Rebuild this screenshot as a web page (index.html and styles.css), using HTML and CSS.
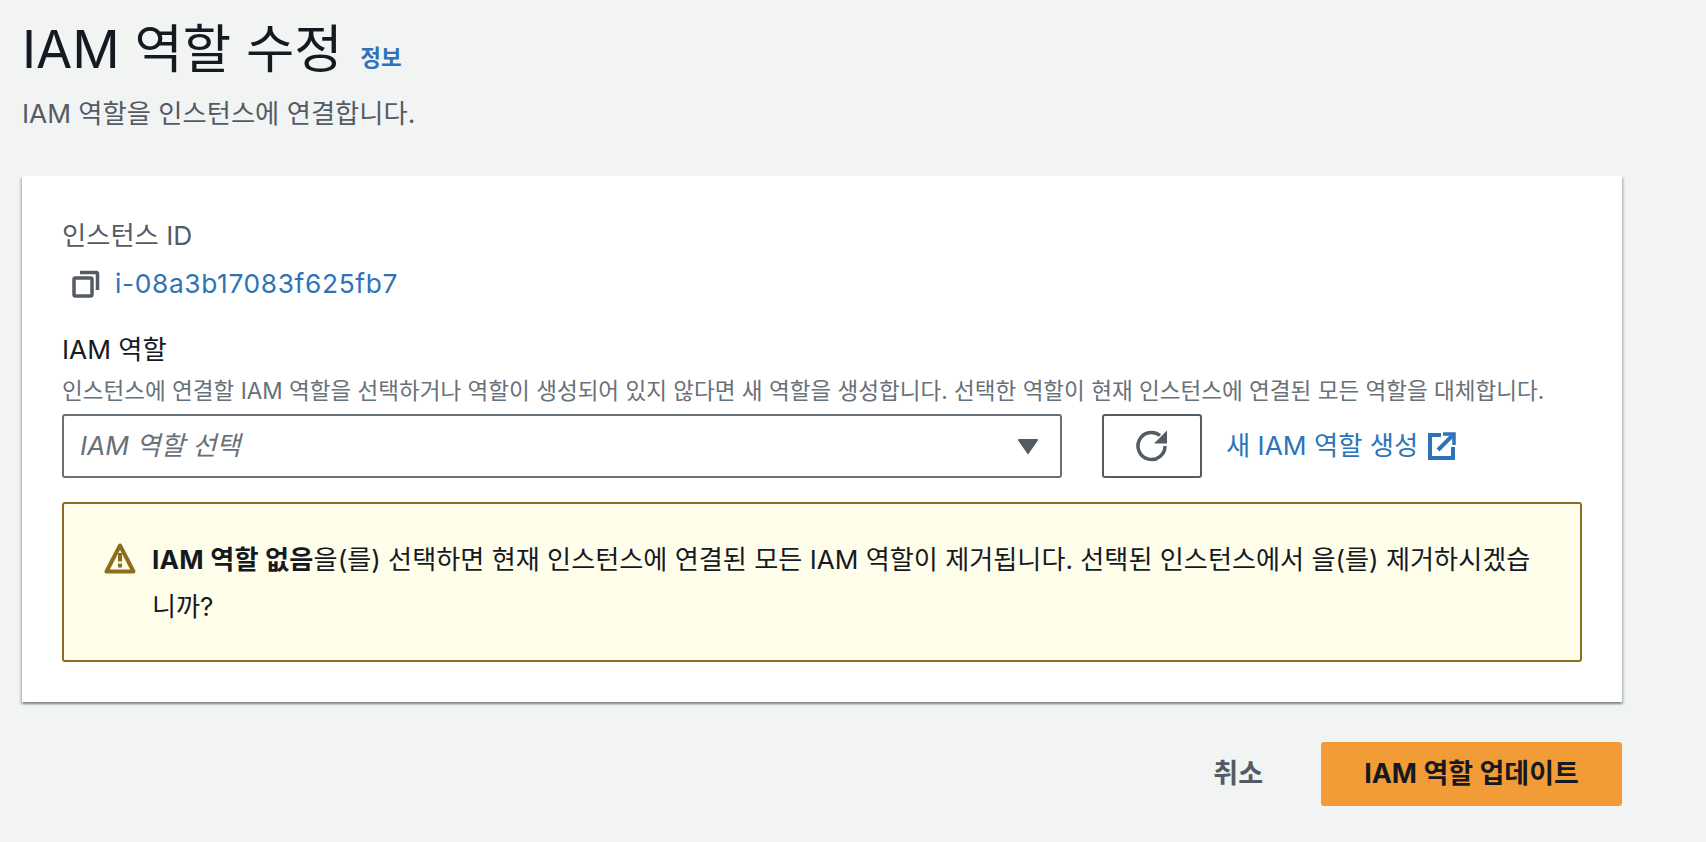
FILE: index.html
```html
<!DOCTYPE html>
<html lang="ko">
<head>
  <meta charset="UTF-8">
  <title>IAM 역할 수정</title>
  <link rel="stylesheet" href="styles.css">
</head>
<body>
  <header class="page-head">
    <h1 class="title">IAM 역할 수정 <a class="info" href="#">정보</a></h1>
    <p class="subtitle">IAM 역할을 인스턴스에 연결합니다.</p>
  </header>

  <section class="card">
    <div class="field-id">
      <div class="id-label">인스턴스 ID</div>
      <div class="id-value">
        <svg class="icon-copy" viewBox="0 0 28 28" width="28" height="28" fill="none" stroke="#545b64" stroke-width="3.500">
          <rect x="2" y="8" width="18" height="18" rx="1.500"></rect>
          <path d="M8 2.500h16a1.500 1.500 0 0 1 1.500 1.500V20"></path>
        </svg>
        <a class="link id-link" href="#">i-08a3b17083f625fb7</a>
      </div>
    </div>

    <div class="field-role">
      <div class="role-label">IAM 역할</div>
      <div class="role-desc">인스턴스에 연결할 IAM 역할을 선택하거나 역할이 생성되어 있지 않다면 새 역할을 생성합니다. 선택한 역할이 현재 인스턴스에 연결된 모든 역할을 대체합니다.</div>
      <div class="role-row">
        <div class="select">
          <span class="select-text">IAM 역할 선택</span>
          <svg class="select-caret" viewBox="0 0 20 15" width="20" height="15" fill="#545b64" stroke="#545b64" stroke-width="2" stroke-linejoin="round">
            <path d="M1 1h18L10 14z"></path>
          </svg>
        </div>
        <button class="refresh" type="button">
          <svg viewBox="0 0 34 34" width="34" height="34" fill="none" stroke="#545b64" stroke-width="3.500">
            <path d="M30 17a13.500 13.500 0 1 1-5-10.500"></path>
            <path d="M32 1.500V14.500H19L32 1.500z" fill="#545b64" stroke="none"></path>
          </svg>
        </button>
        <a class="link new-role" href="#">새 IAM 역할 생성
          <svg viewBox="0 0 28 28" width="28" height="28" fill="none" stroke="#2e73b8" stroke-width="4">
            <path d="M13 3H2v23h23V15"></path>
            <path d="M10 18L24 4"></path>
            <path d="M15 2h11v11" stroke-width="3.500"></path>
          </svg>
        </a>
      </div>
    </div>

    <div class="alert">
      <svg class="icon-warn" viewBox="0 0 32 32" width="32" height="32" fill="none" stroke="#8d6e1f" stroke-width="4">
        <path d="M16 3.500L2.500 29.500h27z" stroke-linejoin="round"></path>
        <path d="M16 11v8.500M16 21.500v4"></path>
      </svg>
      <p class="alert-text"><b>IAM 역할 없음</b>을(를) 선택하면 현재 인스턴스에 연결된 모든 IAM 역할이 제거됩니다. 선택된 인스턴스에서 을(를) 제거하시겠습니까?</p>
    </div>
  </section>

  <footer class="actions">
    <a class="cancel" href="#">취소</a>
    <button class="primary" type="button">IAM 역할 업데이트</button>
  </footer>
</body>
</html>
```

FILE: styles.css
```css
html, body { height: 100%; }
body { margin: 0; padding: 0 84px 0 22px; overflow: hidden; color: #16191f; background-color: #f2f3f3; font-family: "Inter", "Noto Sans CJK KR", sans-serif; font-size: 26.3px; line-height: 36px; }
a { color: #2e73b8; text-decoration: none; }

/* 상단 제목 */
.page-head { padding-top: 16px; height: 176px; box-sizing: border-box; }
.title { margin: 0; font-size: 52.5px; font-weight: 400; line-height: 66px; }
.info { margin-left: 3px; font-size: 22.5px; font-weight: 700; vertical-align: 2px; }
.subtitle { margin: 5px 0 0; color: #545b64; line-height: 36px; }

/* 카드 */
.card { height: 526px; box-sizing: border-box; padding: 42px 40px 0; background-color: #fff; box-shadow: 0 2px 2px 0 rgba(0,28,36,.3), 2px 2px 2px 0 rgba(0,28,36,.15), -2px 2px 2px 0 rgba(0,28,36,.15); }
.id-label { color: #545b64; }
.id-value { display: flex; align-items: center; margin-top: 12px; padding-left: 10px; gap: 15px; }
.id-link { letter-spacing: 0.65px; }
.icon-copy { flex: none; }
.field-role { margin-top: 30px; }
.role-label { line-height: 36px; }
.role-desc { margin-top: 8px; color: #687078; font-size: 22.55px; line-height: 30px; white-space: nowrap; }
.role-row { display: flex; align-items: center; margin-top: 8px; }
.select { display: flex; justify-content: space-between; align-items: center; width: 1000px; height: 64px; box-sizing: border-box; padding: 0 22px 0 16px; border: 2px solid #687078; border-radius: 3px; }
.select-text { color: #687078; font-style: italic; }
.select-caret { flex: none; }
.refresh { display: flex; justify-content: center; align-items: center; width: 100px; height: 64px; margin-left: 40px; padding: 0; border: 2px solid #545b64; border-radius: 3px; background-color: #fff; }
.new-role { display: flex; align-items: center; gap: 10px; margin-left: 24px; }

/* 경고 */
.alert { display: flex; box-sizing: border-box; height: 160px; margin-top: 24px; padding: 32px 34px 0 40px; border: 2px solid #8d6e1f; border-radius: 3px; background-color: #fffeeb; }
.icon-warn { flex: none; margin: 6px 16px 0 0; }
.alert-text { margin: 0; font-size: 26.15px; line-height: 47px; }
.alert-text b { letter-spacing: 0.2px; }

/* 하단 버튼 */
.actions { display: flex; justify-content: flex-end; align-items: center; margin-top: 40px; }
.cancel { margin-right: 58px; color: #545b64; font-size: 27px; font-weight: 700; }
.primary { width: 301px; height: 64px; border: 0; border-radius: 3px; color: #16191f; background-color: #f29c37; font: inherit; font-size: 27px; font-weight: 700; }
```
